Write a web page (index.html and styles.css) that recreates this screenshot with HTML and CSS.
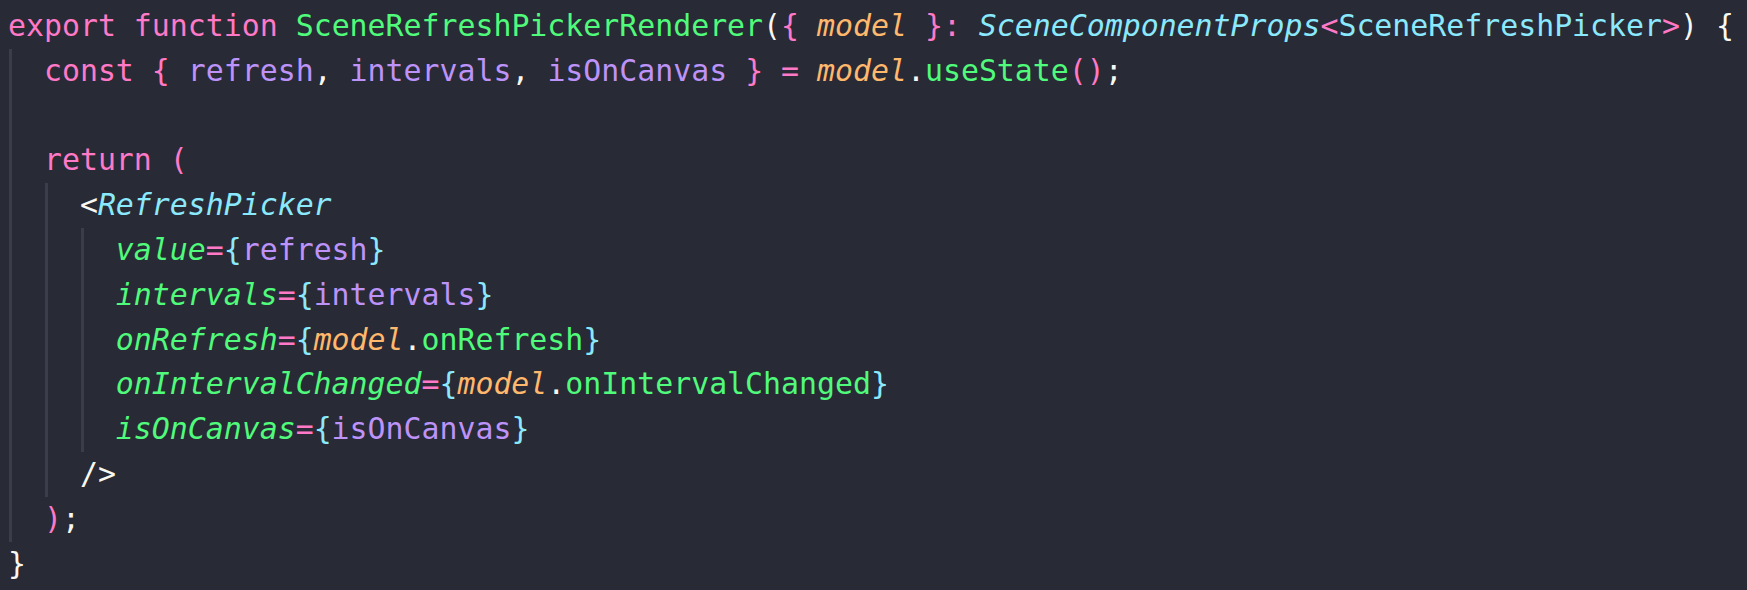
FILE: index.html
```html
<!DOCTYPE html>
<html>
<head>
<meta charset="utf-8">
<link rel="stylesheet" href="styles.css">
</head>
<body>
<div class="code">
  <div class="line"><span class="tx"><span class="kw">export</span> <span class="kw">function</span> <span class="fn">SceneRefreshPickerRenderer</span><span class="pl">(</span><span class="kw">{</span> <span class="param">model</span> <span class="kw">}:</span> <span class="type">SceneComponentProps</span><span class="kw">&lt;</span><span class="cls">SceneRefreshPicker</span><span class="kw">&gt;</span><span class="pl">) {</span></span></div>
  <div class="line"><span class="ind"></span><span class="tx"><span class="kw">const</span> <span class="kw">{</span> <span class="var">refresh</span><span class="pl">,</span> <span class="var">intervals</span><span class="pl">,</span> <span class="var">isOnCanvas</span> <span class="kw">}</span> <span class="kw">=</span> <span class="param">model</span><span class="pl">.</span><span class="fn">useState</span><span class="kw">()</span><span class="pl">;</span></span></div>
  <div class="line"><span class="ind"></span></div>
  <div class="line"><span class="ind"></span><span class="tx"><span class="kw">return (</span></span></div>
  <div class="line"><span class="ind"></span><span class="ind"></span><span class="tx"><span class="pl">&lt;</span><span class="type">RefreshPicker</span></span></div>
  <div class="line"><span class="ind"></span><span class="ind"></span><span class="ind"></span><span class="tx"><span class="attr">value</span><span class="kw">=</span><span class="br">{</span><span class="var">refresh</span><span class="br">}</span></span></div>
  <div class="line"><span class="ind"></span><span class="ind"></span><span class="ind"></span><span class="tx"><span class="attr">intervals</span><span class="kw">=</span><span class="br">{</span><span class="var">intervals</span><span class="br">}</span></span></div>
  <div class="line"><span class="ind"></span><span class="ind"></span><span class="ind"></span><span class="tx"><span class="attr">onRefresh</span><span class="kw">=</span><span class="br">{</span><span class="param">model</span><span class="pl">.</span><span class="fn">onRefresh</span><span class="br">}</span></span></div>
  <div class="line"><span class="ind"></span><span class="ind"></span><span class="ind"></span><span class="tx"><span class="attr">onIntervalChanged</span><span class="kw">=</span><span class="br">{</span><span class="param">model</span><span class="pl">.</span><span class="fn">onIntervalChanged</span><span class="br">}</span></span></div>
  <div class="line"><span class="ind"></span><span class="ind"></span><span class="ind"></span><span class="tx"><span class="attr">isOnCanvas</span><span class="kw">=</span><span class="br">{</span><span class="var">isOnCanvas</span><span class="br">}</span></span></div>
  <div class="line"><span class="ind"></span><span class="ind"></span><span class="tx"><span class="pl">/&gt;</span></span></div>
  <div class="line"><span class="ind"></span><span class="tx"><span class="kw">)</span><span class="pl">;</span></span></div>
  <div class="line"><span class="tx"><span class="pl">}</span></span></div>
</div>
</body>
</html>
```
FILE: styles.css
```css
html, body {
  margin: 0;
  background: #282a36;
}
body {
  width: 1747px;
  height: 590px;
  overflow: hidden;
}
.code {
  padding: 4px 8px;
  font-family: "DejaVu Sans Mono", monospace;
  font-size: 29.87px;
  line-height: 44.8px;
  color: #f8f8f2;
}
.line {
  display: flex;
  height: 44.8px;
}
.tx {
  white-space: pre;
}
.ind {
  flex: none;
  width: 2ch;
  align-self: stretch;
  background: linear-gradient(to right, transparent 1px, #3b3d4a 1px, #3b3d4a 4px, transparent 4px);
}
.kw { color: #ff79c6; }
.fn { color: #50fa7b; }
.pl { color: #f8f8f2; }
.param { color: #ffb86c; font-style: italic; }
.type { color: #8be9fd; font-style: italic; }
.cls { color: #8be9fd; }
.var { color: #bd93f9; }
.attr { color: #50fa7b; font-style: italic; }
.br { color: #8be9fd; }
```
